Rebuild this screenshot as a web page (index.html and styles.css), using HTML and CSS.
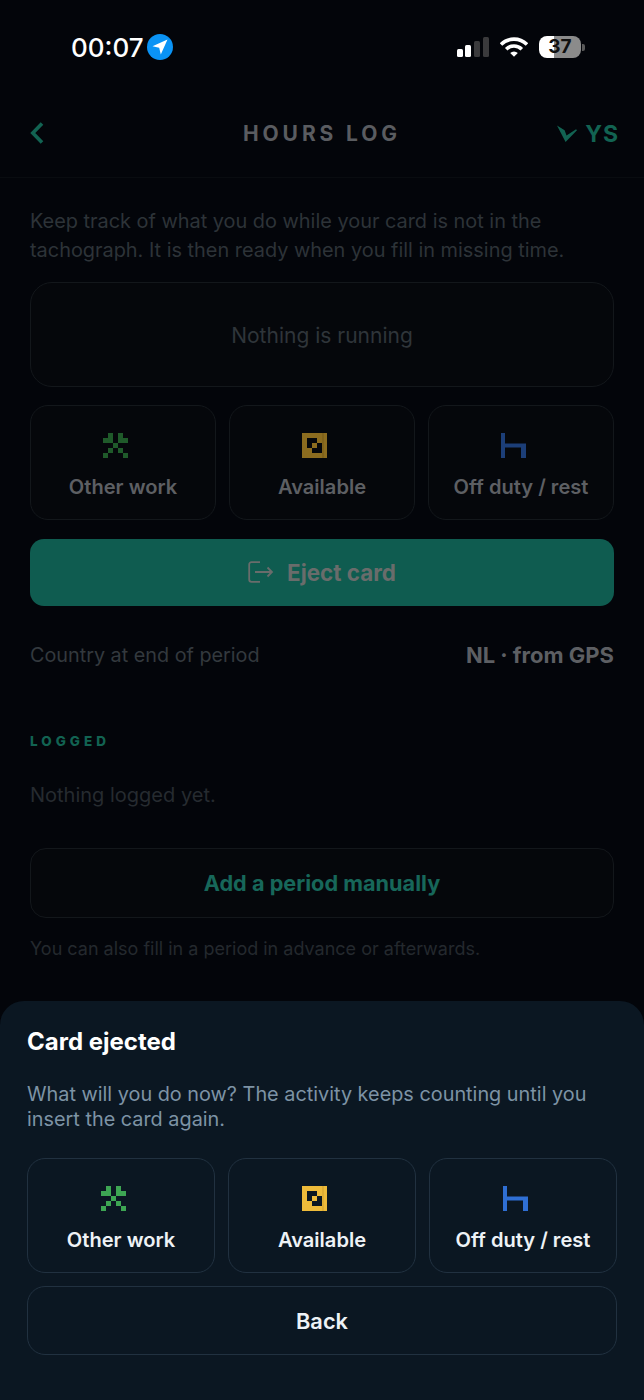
FILE: index.html
```html
<!DOCTYPE html>
<html lang="en">
<head>
  <meta charset="UTF-8" />
  <meta name="viewport" content="width=device-width, initial-scale=1.0" />
  <title>Hours log</title>
  <link rel="stylesheet" href="styles.css">
</head>
<body>
  <div class="screen">

    <!-- Status bar -->
    <div class="status">
      <div class="status-left">
        <span class="time">00:07</span>
        <svg class="location" viewBox="0 0 26 26">
          <circle cx="13" cy="13" r="13" fill="#0a93f5" />
          <path d="M20.5 5.5 L5.5 12.2 L12.2 13.8 L13.8 20.5 Z" fill="#fff" />
        </svg>
      </div>
      <div class="status-right">
        <svg class="signal" viewBox="0 0 32 20">
          <rect x="0" y="12" width="6" height="8" rx="1.5" fill="#fff" />
          <rect x="8" y="8" width="6" height="12" rx="1.5" fill="#fff" />
          <rect x="17" y="4" width="6" height="16" rx="1.5" fill="#3a3a3c" />
          <rect x="26" y="0" width="6" height="20" rx="1.5" fill="#3a3a3c" />
        </svg>
        <svg class="wifi" viewBox="0 0 28 20">
          <path d="M1 7.5 A18.5 18.5 0 0 1 27 7.5" />
          <path d="M6.2 12.2 A11 11 0 0 1 21.8 12.2" />
          <path d="M14 19.8 L10.2 16 A5.4 5.4 0 0 1 17.8 16 Z" class="wifi-dot" />
        </svg>
        <div class="battery">37</div>
        <div class="battery-nub"></div>
      </div>
    </div>

    <header class="header">
      <svg class="back" viewBox="0 0 14 22">
        <path d="M12 1.5 L2.8 11 L12 20.5" />
      </svg>
      <h1 class="title">HOURS LOG</h1>
      <div class="logo">
        <svg class="logo-v" viewBox="0 0 21 18">
          <path d="M0 0 L8 5 L10 10.5 L20 4 L21 5 L9 17.5 Z" />
        </svg>
        <span>YS</span>
      </div>
    </header>

    <main class="content">
      <p class="intro">Keep track of what you do while your card is not in the tachograph. It is then ready when you fill in missing time.</p>

      <div class="running">Nothing is running</div>

      <div class="activities">
        <button class="activity">
          <svg class="icon icon-work" viewBox="0 0 5 5"><path d="M1 0h1v2h-2v-1h1zM3 0h1v1h1v1h-2zM2 2h1v1h-1zM1 3h1v1h-1zM3 3h1v1h-1zM0 4h1v1h-1zM4 4h1v1h-1z" /></svg>
          <span>Other work</span>
        </button>
        <button class="activity">
          <svg class="icon icon-available" viewBox="0 0 25 25"><rect class="fill" width="25" height="25" /><rect class="hole" x="5" y="5" width="10" height="10" /><rect class="hole" x="10" y="10" width="10" height="10" /><rect class="fill" x="10" y="10" width="5" height="5" /><rect class="seam" x="20.6" width="0.8" height="25" /></svg>
          <span>Available</span>
        </button>
        <button class="activity">
          <svg class="icon icon-rest" viewBox="0 0 25 25"><path d="M0 0h4v10.5h21v14.5h-5v-10.5h-16v10.5h-4z" /></svg>
          <span>Off duty / rest</span>
        </button>
      </div>

      <button class="eject">
        <svg class="eject-icon" viewBox="0 0 26 22">
          <path d="M12 1.2 H3.5 A2.3 2.3 0 0 0 1.2 3.5 V18.5 A2.3 2.3 0 0 0 3.5 20.8 H12" />
          <path d="M7 11 H24 M19.5 6.5 L24 11 L19.5 15.5" />
        </svg>
        <span>Eject card</span>
      </button>

      <div class="country">
        <span>Country at end of period</span>
        <strong>NL · from GPS</strong>
      </div>

      <h2 class="section-label">LOGGED</h2>
      <p class="empty">Nothing logged yet.</p>

      <button class="add-period">Add a period manually</button>
      <p class="hint">You can also fill in a period in advance or afterwards.</p>
    </main>

    <!-- Bottom sheet -->
    <div class="sheet">
      <h3 class="sheet-title">Card ejected</h3>
      <p class="sheet-text">What will you do now? The activity keeps counting until you insert the card again.</p>
      <div class="activities">
        <button class="activity">
          <svg class="icon icon-work" viewBox="0 0 5 5"><path d="M1 0h1v2h-2v-1h1zM3 0h1v1h1v1h-2zM2 2h1v1h-1zM1 3h1v1h-1zM3 3h1v1h-1zM0 4h1v1h-1zM4 4h1v1h-1z" /></svg>
          <span>Other work</span>
        </button>
        <button class="activity">
          <svg class="icon icon-available" viewBox="0 0 25 25"><rect class="fill" width="25" height="25" /><rect class="hole" x="5" y="5" width="10" height="10" /><rect class="hole" x="10" y="10" width="10" height="10" /><rect class="fill" x="10" y="10" width="5" height="5" /><rect class="seam" x="20.6" width="0.8" height="25" /></svg>
          <span>Available</span>
        </button>
        <button class="activity">
          <svg class="icon icon-rest" viewBox="0 0 25 25"><path d="M0 0h4v10.5h21v14.5h-5v-10.5h-16v10.5h-4z" /></svg>
          <span>Off duty / rest</span>
        </button>
      </div>
      <button class="back-btn">Back</button>
    </div>

  </div>
</body>
</html>
```

FILE: styles.css
```css
*, *::before, *::after {
  box-sizing: border-box;
}

html, body {
  margin: 0;
  padding: 0;
  background-color: #03050a;
  font-family: 'Inter', sans-serif;
}

button {
  font-family: 'Inter', sans-serif;
  cursor: pointer;
}

.screen {
  position: relative;
  width: 644px;
  height: 1400px;
  overflow: hidden;
  background-color: #03050a;
}

/* Status bar */
.status {
  height: 94px;
  display: flex;
  justify-content: space-between;
  align-items: center;
  padding: 0 59px 0 71px;
}

.status-left {
  display: flex;
  align-items: center;
  gap: 3px;
}

.time {
  font-size: 26px;
  font-weight: 500;
  color: #fff;
}

.location {
  width: 26px;
  height: 26px;
}

.status-right {
  display: flex;
  align-items: center;
}

.signal {
  width: 32px;
  height: 20px;
  margin-right: 11px;
}

.wifi {
  width: 28px;
  height: 20px;
  margin-right: 11px;
}

.wifi path {
  fill: none;
  stroke: #fff;
  stroke-width: 3.6;
}

.wifi .wifi-dot {
  fill: #fff;
  stroke: none;
}

.battery {
  width: 42px;
  height: 22px;
  border-radius: 8px;
  background: linear-gradient(90deg, #fff 36%, #8b8b8b 36%);
  color: #111;
  font-size: 19px;
  font-weight: 700;
  line-height: 22px;
  text-align: center;
}

.battery-nub {
  width: 3px;
  height: 7px;
  margin-left: 1px;
  border-radius: 0 2px 2px 0;
  background-color: #5a5a5a;
}

/* Header */
.header {
  height: 84px;
  padding: 0 25px 6px 30px;
  display: flex;
  justify-content: space-between;
  align-items: center;
  position: relative;
  border-bottom: 1px solid #090c10;
}

.back {
  width: 14px;
  height: 22px;
}

.back path {
  fill: none;
  stroke: #126352;
  stroke-width: 3.6;
}

.title {
  position: absolute;
  left: 0;
  right: 0;
  margin: 1px 0 0;
  text-align: center;
  font-size: 21px;
  font-weight: 700;
  letter-spacing: 3.9px;
  color: #5a5c60;
}

.logo {
  display: flex;
  align-items: center;
  gap: 8px;
  margin-top: 3px;
  font-size: 23px;
  font-weight: 700;
  letter-spacing: 1px;
  color: #126352;
}

.logo-v {
  width: 20px;
  height: 18px;
  fill: #126352;
}

/* Main content */
.content {
  padding: 29px 30px 0;
}

.intro {
  margin: 0;
  font-size: 19.9px;
  line-height: 29px;
  color: #2d3338;
}

.running {
  margin-top: 17px;
  height: 105px;
  padding-top: 1px;
  display: flex;
  align-items: center;
  justify-content: center;
  font-size: 21px;
  color: #2f353a;
  background-color: #05070b;
  border: 1px solid #13171b;
  border-radius: 22px;
}

.activities {
  display: grid;
  grid-template-columns: repeat(3, 1fr);
  gap: 13px;
}

.content .activities {
  margin-top: 18px;
}

.activity {
  height: 115px;
  padding: 27px 0 0;
  display: flex;
  flex-direction: column;
  align-items: center;
  gap: 17px;
  font-size: 20.1px;
  font-weight: 600;
  line-height: 24px;
  color: #5d5f63;
  background-color: #05070b;
  border: 1px solid #13171b;
  border-radius: 18px;
}

.icon {
  width: 25px;
  height: 25px;
  flex: none;
  margin-right: 15px;
}

.icon-work {
  fill: #1f5a2a;
}

.icon-available .fill {
  fill: #8c6c1f;
}

.icon-available .hole {
  fill: #05070b;
}

.icon-available .seam {
  fill: #6f5518;
}

.icon-rest {
  fill: #1c3e78;
}

.eject {
  margin-top: 19px;
  width: 100%;
  height: 67px;
  padding: 0 0 1px;
  display: flex;
  align-items: center;
  justify-content: center;
  gap: 13px;
  font-size: 22.4px;
  font-weight: 700;
  color: #696c6b;
  background-color: #0f5c50;
  border: none;
  border-radius: 14px;
}

.eject-icon {
  width: 26px;
  height: 22px;
  fill: none;
  stroke: #696c6b;
  stroke-width: 1.8;
}

.country {
  margin-top: 34px;
  height: 30px;
  display: flex;
  justify-content: space-between;
  align-items: center;
  font-size: 19.8px;
  color: #33393e;
}

.country strong {
  font-size: 22px;
  font-weight: 700;
  color: #5d5f63;
}

.section-label {
  margin: 63px 0 0;
  font-size: 13.5px;
  font-weight: 800;
  line-height: 16px;
  letter-spacing: 4px;
  color: #126352;
}

.empty {
  margin: 33px 0 0;
  font-size: 20px;
  line-height: 26px;
  color: #262b30;
}

.add-period {
  margin-top: 40px;
  width: 100%;
  height: 70px;
  font-size: 21.7px;
  font-weight: 700;
  color: #17675a;
  background-color: #05070b;
  border: 1px solid #13171b;
  border-radius: 16px;
}

.hint {
  margin: 19px 0 0;
  font-size: 18px;
  line-height: 24px;
  color: #24292e;
}

/* Bottom sheet */
.sheet {
  position: absolute;
  left: 0;
  right: 0;
  bottom: 0;
  padding: 27px 27px 45px;
  background-color: #0b1722;
  border-radius: 24px 24px 0 0;
}

.sheet-title {
  margin: 0;
  font-size: 24px;
  font-weight: 700;
  line-height: 28px;
  color: #fff;
}

.sheet-text {
  margin: 26px 0 26px;
  font-size: 19.85px;
  line-height: 25px;
  color: #7d93a5;
}

.sheet .activity {
  color: #eef2f6;
  background-color: transparent;
  border-color: #213140;
}

.sheet .icon-work {
  fill: #3da653;
}

.sheet .icon-available .fill {
  fill: #eebb3a;
}

.sheet .icon-available .hole {
  fill: #0b1722;
}

.sheet .icon-available .seam {
  fill: #c99a2b;
}

.sheet .icon-rest {
  fill: #2f6fd4;
}

.back-btn {
  margin-top: 13px;
  width: 100%;
  height: 69px;
  font-size: 21.8px;
  font-weight: 600;
  color: #eef2f6;
  background-color: transparent;
  border: 1px solid #213140;
  border-radius: 18px;
}
```
